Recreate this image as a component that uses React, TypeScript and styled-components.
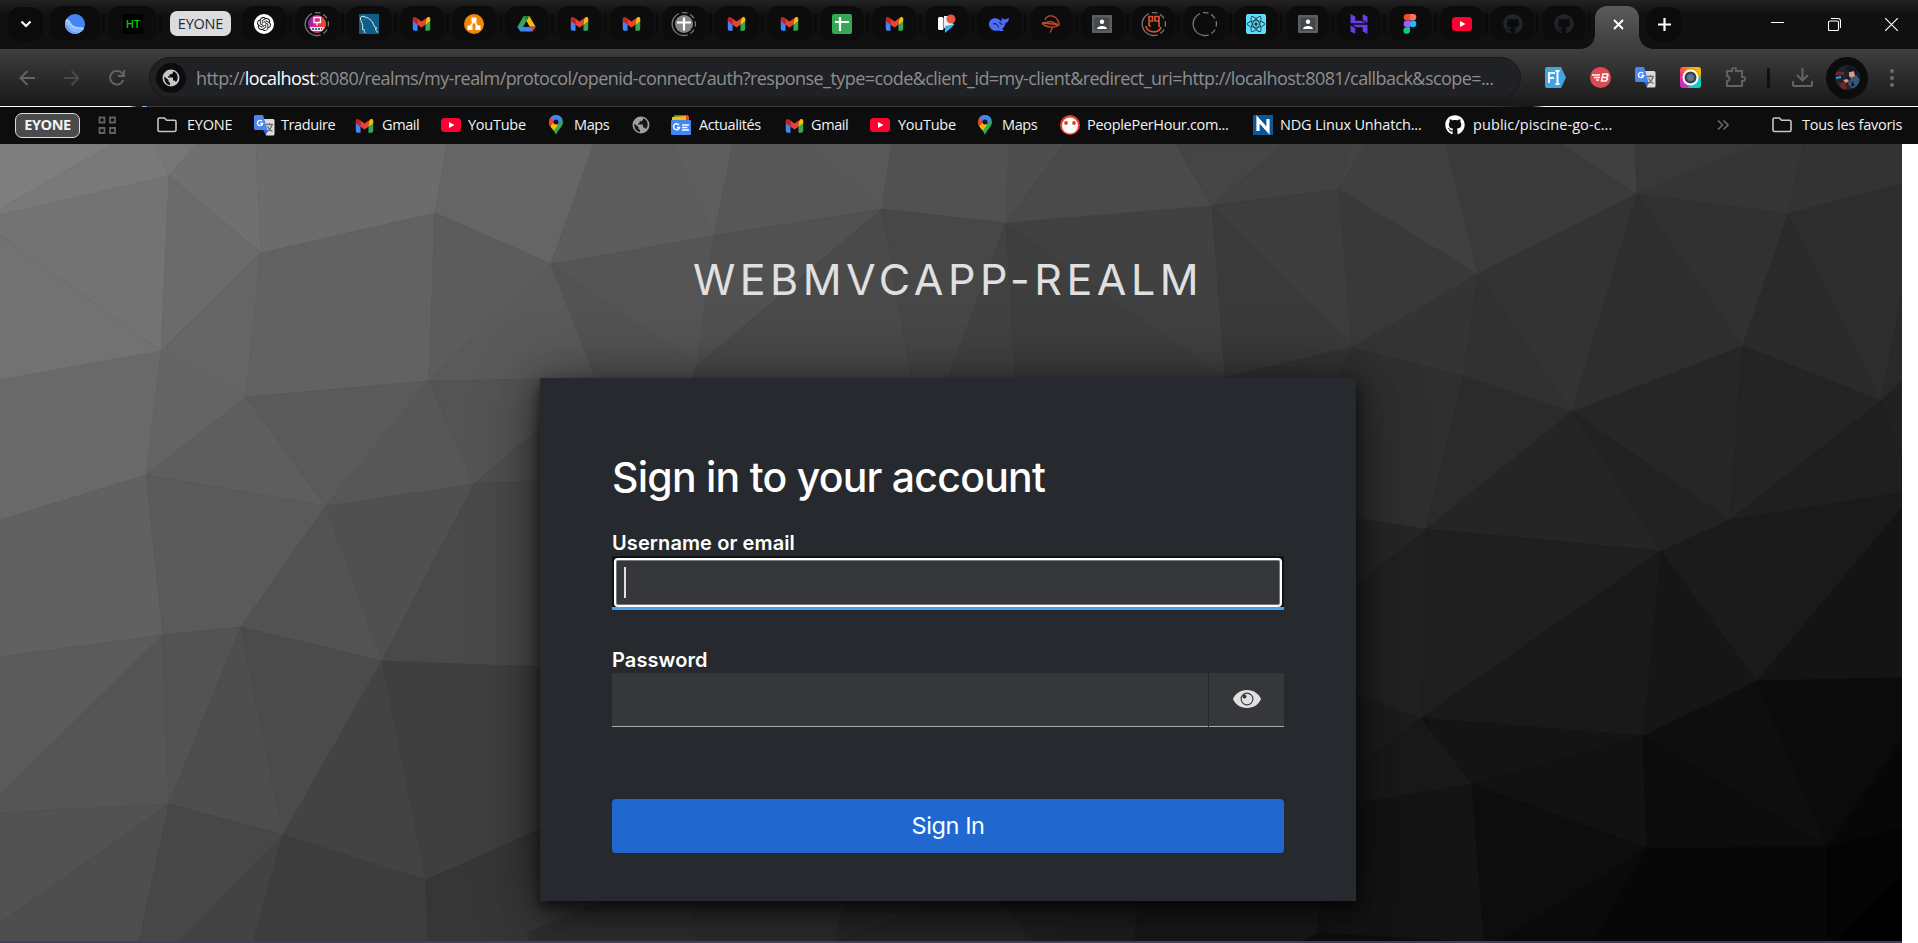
import React from "react";
import styled, { createGlobalStyle, css } from "styled-components";
import { FaGithub, FaReact } from "react-icons/fa";
import { SiOpenai, SiHostinger } from "react-icons/si";

const Global = createGlobalStyle`
  *, *::before, *::after { box-sizing: border-box; }
  html, body { margin: 0; padding: 0; background: #fff; overflow: hidden; }
  body { font-family: "Open Sans", "Noto Sans", sans-serif; }
  button, input { font: inherit; color: inherit; border: 0; padding: 0; background: none; }
  svg { display: block; flex: none; }
`;

const Window = styled.div`
  width: 1918px;
  height: 943px;
  display: flex;
  flex-direction: column;
  overflow: hidden;
  background: #0d0d0d;
`;

const uiText = css`
  font-family: "Open Sans", "Noto Sans", sans-serif;
  white-space: nowrap;
`;

/* ---------- tab strip ---------- */

const TabStrip = styled.header`
  flex: none;
  height: 49px;
  display: flex;
  align-items: flex-start;
  background: linear-gradient(#222 0, #181818 8px, #101010 16px, #101010 100%);
`;

const RoundButton = styled.button`
  width: 35px;
  height: 34px;
  margin: 7px 3px 0 8px;
  display: grid;
  place-items: center;
  border-radius: 12px;
  background: #0b0b0b;
`;

const Tab = styled.div<{ $w: number }>`
  position: relative;
  flex: none;
  width: ${(p) => p.$w}px;
  height: 35px;
  margin-top: 6px;
  padding: 0 4px;
  display: flex;
  &::after {
    content: "";
    position: absolute;
    right: -1px;
    top: 8px;
    width: 3px;
    height: 19px;
    background: #0a0a0a;
  }
`;

const TabPill = styled.div`
  flex: 1;
  display: grid;
  place-items: center;
  border-radius: 12px;
  background: #0c0c0c;
`;

const GroupLabel = styled.div`
  ${uiText}
  flex: none;
  width: 61px;
  height: 25px;
  margin: 11px 7px 0 9px;
  border-radius: 7px;
  background: #dadce0;
  color: #27282b;
  font-size: 14.5px;
  line-height: 25px;
  text-align: center;
  letter-spacing: -0.2px;
`;

const ActiveTab = styled.div`
  position: relative;
  flex: none;
  width: 44px;
  height: 43px;
  margin: 6px 0 0 5.4px;
  padding-left: 3px;
  display: grid;
  place-items: center;
  padding-bottom: 7px;
  border-radius: 12px 12px 0 0;
  background: linear-gradient(#5b5b5b, #3c3c3c);
  &::before, &::after {
    content: "";
    position: absolute;
    bottom: 0;
    width: 14px;
    height: 14px;
  }
  &::before { left: -14px; background: radial-gradient(circle at 0 0, transparent 13.5px, #3e3e3e 14px); }
  &::after { right: -14px; background: radial-gradient(circle at 100% 0, transparent 13.5px, #3e3e3e 14px); }
`;

const WindowControls = styled.div`
  margin-left: auto;
  height: 48px;
  display: flex;
  align-items: center;
  gap: 44px;
  padding-right: 20px;
`;

/* ---------- address bar ---------- */

const Toolbar = styled.div`
  flex: none;
  height: 57px;
  display: flex;
  align-items: center;
  padding-left: 19px;
  background: linear-gradient(#3e3e3e, #181818);
`;

const NavIcons = styled.div`
  display: flex;
  gap: 29px;
  margin-right: 24px;
`;

const Omnibox = styled.div`
  width: 1372px;
  height: 41px;
  display: flex;
  align-items: center;
  padding-left: 6px;
  border-radius: 21px;
  border: 1px solid #17181a;
  background: #202124;
`;

const SiteInfo = styled.span`
  width: 30px;
  height: 30px;
  display: grid;
  place-items: center;
  border-radius: 50%;
  background: #0c0c0c;
`;

const Url = styled.span`
  ${uiText}
  margin-left: 10px;
  font-size: 18px;
  color: #8e8e8e;
  letter-spacing: -0.57px;
  b { font-weight: 400; color: #fff; }
`;

const Extensions = styled.div`
  display: flex;
  align-items: center;
  gap: 24px;
  margin-left: 24px;
`;

const Divider = styled.span`
  width: 3px;
  height: 20px;
  margin: 0 -2px 0 -3px;
  border-radius: 2px;
  background: #101010;
`;

const Profile = styled.span`
  width: 42px;
  height: 42px;
  margin: 0 -2px 0 -11px;
  display: grid;
  place-items: center;
  border-radius: 50%;
  background: #0c0c0c;
`;

const LoadLine = styled.div`
  flex: none;
  height: 1px;
  background: linear-gradient(90deg, #fff 0 129px, #222 137px 142px, #8ab4f8 142px 147px, #3b3b3b 147px 1490px, #111 1532px, #fff 1545px);
`;

/* ---------- bookmarks ---------- */

const Bookmarks = styled.nav`
  ${uiText}
  flex: none;
  height: 37px;
  display: flex;
  align-items: center;
  padding-bottom: 1px;
  background: #0d0d0d;
  color: #f1f3f4;
  font-size: 14.5px;
`;

const Chip = styled.span`
  width: 65px;
  height: 25px;
  margin: 0 18px 0 15px;
  border: 1px solid #dadce0;
  border-radius: 7px;
  background: #4a4b4d;
  font-weight: 700;
  letter-spacing: -0.4px;
  line-height: 22px;
  text-align: center;
`;

const Bookmark = styled.span<{ $w: number; $gap?: number; $track?: number }>`
  flex: none;
  width: ${(p) => p.$w}px;
  display: flex;
  align-items: center;
  gap: ${(p) => p.$gap ?? 8}px;
  line-height: 18px;
  letter-spacing: ${(p) => p.$track ?? -0.4}px;
`;

/* ---------- login page ---------- */

const PageRow = styled.div`
  flex: 1;
  min-height: 0;
  display: flex;
`;

const Page = styled.main`
  position: relative;
  flex: none;
  width: 1902px;
  display: flex;
  flex-direction: column;
  align-items: center;
  padding-right: 6px;
  font-family: Inter, "Liberation Sans", sans-serif;
  border-bottom: 2px solid #3c4256;
  overflow: hidden;
`;

const Backdrop = styled.svg`
  position: absolute;
  left: 0;
  top: 0;
  z-index: 0;
`;

const Gutter = styled.div`
  flex: 1;
  background: #fff;
`;

const Realm = styled.h1`
  position: relative;
  margin: 109px 0 0;
  height: 125px;
  line-height: 52px;
  font-size: 43px;
  font-weight: 400;
  letter-spacing: 4.5px;
  color: #e0e0e0;
  white-space: nowrap;
`;

const Card = styled.section`
  position: relative;
  width: 816px;
  height: 523px;
  padding: 72px 72px 0;
  background: #26292d;
  color: #fff;
  box-shadow: 0 6px 12px rgba(3, 3, 3, 0.6), 0 0 60px rgba(3, 3, 3, 0.4), 0 16px 36px rgba(3, 3, 3, 0.35);
`;

const Title = styled.h2`
  margin: 0;
  height: 81px;
  line-height: 54px;
  font-size: 41px;
  font-weight: 500;
  letter-spacing: -0.76px;
  white-space: nowrap;
`;

const Label = styled.label`
  display: block;
  height: 25px;
  line-height: 24px;
  font-size: 20px;
  font-weight: 600;
  letter-spacing: 0.1px;
`;

const FocusedField = styled.div`
  height: 54px;
  margin-bottom: 38px;
  padding: 2px 2px 0;
  border-bottom: 3px solid #45a1f5;
  background: #111214;
`;

const FocusRing = styled.div`
  height: 49px;
  display: flex;
  align-items: center;
  padding-left: 8px;
  border: 2px solid #fff;
  border-radius: 4px;
  background: #36373b;
  box-shadow: inset 0 0 0 1px #77787b;
`;

const Caret = styled.span`
  width: 2px;
  height: 31px;
  background: #e0e0e0;
`;

const PasswordRow = styled.div`
  display: flex;
  gap: 1px;
  height: 54px;
  margin-bottom: 72px;
`;

const PasswordBox = styled.div`
  flex: 1;
  background: #36373b;
  border-bottom: 1px solid #aaabac;
`;

const EyeButton = styled.button`
  width: 75px;
  display: grid;
  place-items: center;
  padding-bottom: 1px;
  background: #36373b;
  border-bottom: 1px solid #aaabac;
`;

const SubmitButton = styled.button`
  width: 100%;
  height: 54px;
  border-radius: 4px;
  background: #2067cf;
  font-size: 23.5px;
  line-height: 54px;
  letter-spacing: -0.4px;
  text-align: center;
`;

/* ---------- icons ---------- */

const Gmail = ({ s = 19 }: { s?: number }) => (
  <svg width={s} height={s} viewBox="0 0 24 24">
    <path fill="#4285f4" d="M1 6v13a2 2 0 0 0 2 2h4V10z" />
    <path fill="#34a853" d="M23 6v13a2 2 0 0 1-2 2h-4V10z" />
    <path fill="#c5221f" d="M1 6v3l6 4.500V8L4.500 4C2.600 3.600 1 4.300 1 6z" />
    <path fill="#fbbc04" d="M23 6v3l-6 4.500V8l2.500-4C21.400 3.600 23 4.300 23 6z" />
    <path fill="#ea4335" d="M4.500 4L12 9.500 19.500 4 17 8v5.500l-5 3.700-5-3.700V8z" />
  </svg>
);

const YouTube = () => (
  <svg width="20" height="20" viewBox="0 0 20 20">
    <rect y="3" width="20" height="14" rx="3.500" fill="#ff0033" />
    <path fill="#fff" d="M8 7l5.500 3L8 13z" />
  </svg>
);

const MapsPin = () => (
  <svg width="20" height="20" viewBox="0 0 20 20">
    <clipPath id="pin"><path d="M10 0a7 7 0 0 0-7 7c0 5 5 7 7 13 2-6 7-8 7-13a7 7 0 0 0-7-7z" /></clipPath>
    <g clipPath="url(#pin)">
      <path fill="#34a853" d="M0 0h20v20H0z" />
      <path fill="#fbbc04" d="M0 14l3-4 5-3 4 3-6 8z" />
      <path fill="#ea4335" d="M0 2l5 0 4 4-5 6-4-3z" />
      <path fill="#4285f4" d="M3 1L10-1l8 3-6 8-2-3-2-1z" />
    </g>
    <circle cx="10" cy="7" r="2.500" fill="#15181d" />
  </svg>
);

const Translate = () => (
  <svg width="21" height="21" viewBox="0 0 21 21">
    <path fill="#dcdcdc" d="M7 4h12a1.500 1.500 0 0 1 1.500 1.500V19a1.500 1.500 0 0 1-1.500 1.500h-7z" />
    <path fill="#3367d6" d="M9 15h5l-2 5z" />
    <path stroke="#68737c" strokeWidth="1.300" fill="none" d="M12 9.500h7M15.500 8v1.500M18 9.500c-1 4-3 6-5 7M13.500 11.500c1 2 3 4 5 5" />
    <path fill="#4a86ee" d="M1.500 0H9l4.500 15H1.500A1.500 1.500 0 0 1 0 13.500v-12A1.500 1.500 0 0 1 1.500 0z" />
    <path fill="none" stroke="#fff" strokeWidth="1.400" d="M8 6.300A2.600 2.600 0 1 0 8.600 8.500H6.300" />
  </svg>
);

const Folder = () => (
  <svg width="20" height="16" viewBox="0 0 20 16">
    <path fill="none" stroke="#c4c6c9" strokeWidth="1.600" d="M1 13V2.500A1.500 1.500 0 0 1 2.500 1h5l2 2.300h8A1.500 1.500 0 0 1 19 4.800V13a1.500 1.500 0 0 1-1.500 1.500h-15A1.500 1.500 0 0 1 1 13z" />
  </svg>
);

const Globe = ({ s = 18, c = "#c7c7c7", bg = "#0c0c0c" }: { s?: number; c?: string; bg?: string }) => (
  <svg width={s} height={s} viewBox="0 0 18 18">
    <circle cx="9" cy="9" r="8.500" fill={c} />
    <path fill={bg} d="M2.200 7.500L6.500 11v1.500L8 14v2C4.500 15.500 2 12.500 2.200 7.500zM11 2.300v1.500L9.500 5.200H7.500v2H6v1.300h5v3h1.500l1.500 1.500c1.800-2 2.200-5 1-7.500-.8-1.600-2-2.700-4-3.200z" />
  </svg>
);

const Dashes = ({ children }: { children?: React.ReactNode }) => (
  <svg width="26" height="26" viewBox="0 0 26 26">
    <path d="M12 24.500a11.500 11.500 0 0 1-4-22" fill="none" stroke="#77787a" strokeWidth="1.300" />
    <path d="M11 1.700A11.500 11.500 0 1 1 12 24.500" fill="none" stroke="#77787a" strokeWidth="1.300" strokeDasharray="5.500 3" />
    {children}
  </svg>
);

const GithubMark = ({ c }: { c: string }) => <FaGithub size={20} color={c} />;

const Contact = () => (
  <svg width="20" height="20" viewBox="0 0 20 20">
    <rect y="1" width="20" height="18" rx="1" fill="#5c5f62" />
    <rect x="2.500" y="3.500" width="15" height="13" fill="#44474a" />
    <circle cx="10" cy="7.700" r="2.200" fill="#fff" />
    <path d="M5 15c0-4 10-4 10 0z" fill="#fff" />
  </svg>
);

const tabIcons: Record<string, React.ReactNode> = {
  earth: (
    <svg width="20" height="20" viewBox="0 0 20 20">
      <clipPath id="ball"><circle cx="10" cy="10" r="10" /></clipPath>
      <g clipPath="url(#ball)">
        <path fill="#4285f4" d="M0 0h20v20H0z" />
        <path fill="#8ab8fa" d="M0 5c5-1 5 5 9 7s7 0 11 3v5H0z" />
        <path fill="#aecbfa" d="M0 5c5-1 5 5 9 7s7 0 11 3l-1 1.500c-4-3-7-1-11-3S4 7 0 8z" />
        <path fill="#669df6" d="M0 11c4 0 4 6 9 7l6 1v2H0z" />
      </g>
    </svg>
  ),
  ht: (
    <svg width="20" height="20" viewBox="0 0 20 20">
      <rect width="20" height="20" rx="1" fill="#000" />
      <text x="10" y="14" fill="#0c0" fontSize="11" fontFamily="Open Sans, sans-serif" fontWeight="600" textAnchor="middle">HT</text>
    </svg>
  ),
  openai: (
    <svg width="20" height="20" viewBox="0 0 20 20">
      <circle cx="10" cy="10" r="10" fill="#fff" />
      <g transform="translate(3 3)"><SiOpenai size={14} color="#111" /></g>
    </svg>
  ),
  insta: (
    <Dashes>
      <defs>
        <linearGradient id="ig" x1="0" x2="1" y1="0" y2=".3"><stop stopColor="#5b2fc0" /><stop offset=".5" stopColor="#e0218a" /><stop offset="1" stopColor="#f4511e" /></linearGradient>
      </defs>
      <circle cx="13" cy="13" r="9" fill="url(#ig)" />
      <path d="M10 6.500h6.500v5H10zM13 11.500v3" fill="none" stroke="#fff" strokeWidth="1.300" />
      <path d="M5.500 16h15l-2.500 4H8z" fill="#e8e8f4" />
      <path d="M8 18h10" stroke="#25356b" strokeWidth="1.500" strokeDasharray="2 1" />
    </Dashes>
  ),
  mysql: (
    <svg width="20" height="20" viewBox="0 0 20 20">
      <rect width="20" height="20" fill="#0f5e87" />
      <path fill="none" stroke="#e2edf3" strokeWidth="1" d="M6 19c-1-2-1-3-1-4-1 1-1.500 1-1.500 0 .5-3 0-5-1-7S1 4 2 3s3-1 4 0c5 1 8 5 9 9l3 2.500-2 .5c1 1 2 2 2.500 3.500M5.500 5.500l.5.500" />
    </svg>
  ),
  gmail: <Gmail />,
  nodes: (
    <svg width="20" height="20" viewBox="0 0 20 20">
      <circle cx="10" cy="10" r="10" fill="#f08705" />
      <path d="M10 7L6 13M10 7l4 6" stroke="#fff" strokeWidth="1.500" />
      <path fill="#fff" d="M7.500 3.500h5v4.500h-5zM3.500 11.500h5V16h-5zM11.500 11.500h5V16h-5z" />
    </svg>
  ),
  drive: (
    <svg width="19" height="19" viewBox="0 0 24 24">
      <path fill="#34a853" d="M8.500 2.500L0.500 16l4 6L12 9z" />
      <path fill="#fbbc04" d="M8.500 2.500h7L23.500 16h-8z" />
      <path fill="#4285f4" d="M4.500 22L0.500 16h23l-4 6z" />
      <path fill="#ea4335" d="M16 16h7.500l-4 6z" />
      <path fill="#188038" d="M8.500 2.500h7L12 9z" />
      <path fill="#0c0c0c" d="M12 9l4 7H8z" />
    </svg>
  ),
  sheetGrey: (
    <Dashes>
      <circle cx="13" cy="13" r="9" fill="#858585" />
      <path d="M13 6.500v13M6 11.500h14" stroke="#fff" strokeWidth="2.200" />
    </Dashes>
  ),
  sheet: (
    <svg width="20" height="20" viewBox="0 0 20 20">
      <rect width="20" height="20" rx="2" fill="#34a853" />
      <path d="M8 3v14M3 8h14" stroke="#fff" strokeWidth="2.200" />
    </svg>
  ),
  cards: (
    <svg width="20" height="20" viewBox="0 0 20 20">
      <rect x="1" y="3" width="5.500" height="13" rx="1.500" fill="#fff" />
      <path d="M7 2h5v6l5 2-3 3-7 1z" fill="#eee" />
      <path d="M8 12l10-2-4 4-6 5z" fill="#29b6f6" />
      <circle cx="14" cy="5" r="4.500" fill="#ea5545" />
    </svg>
  ),
  whale: (
    <svg width="20" height="20" viewBox="0 0 20 20">
      <path fill="#4d6bfe" d="M0 10c0-4 4-6.500 8-5.500 2 .5 3 1.500 4.500 3 .5-1.500-.5-3 .5-4 .5 1.500 2 2 3.500 1.700L20 4c0 3-1.500 4.500-3.500 5-.5 3-2 5-3.500 6l2 1.500c-2 1-4 .5-5 0C4 18 0 14.500 0 10z" />
      <path fill="none" stroke="#0c0c0c" strokeWidth="1" d="M4 10c3-1 5 1 5.500 3.500M10 8.500c1.500 0 2.500 1 3 2.500" />
    </svg>
  ),
  hat: (
    <svg width="20" height="20" viewBox="0 0 20 20">
      <path fill="none" stroke="#c4492b" strokeWidth="1.300" d="M4 6c2-6 11-6 14 3v3" />
      <path fill="none" stroke="#c4492b" strokeWidth="1.300" d="M1 9l16 1.500L10 7.500zM1 9c4 5 9 5 16 3M9 18.500l2.500-5 5-2" />
    </svg>
  ),
  contact: <Contact />,
  pq: (
    <Dashes>
      <path fill="none" stroke="#d9532f" strokeWidth="1.700" d="M8 15V5.500h3.500v4.500H8M18 10h-4V5.500h4V16M5 15c1 7 13 8 15 1M8 15h2" />
    </Dashes>
  ),
  empty: <Dashes />,
  react: (
    <svg width="20" height="20" viewBox="0 0 20 20">
      <rect width="20" height="20" rx="2" fill="#61dafb" />
      <g transform="translate(1 1)"><FaReact size={18} color="#17303a" /></g>
    </svg>
  ),
  hostinger: <SiHostinger size={20} color="#673de6" />,
  figma: (
    <svg width="14" height="20" viewBox="0 0 14 20">
      <path fill="#f24e1e" d="M7 0H4a3.300 3.300 0 0 0 0 6.600h3z" />
      <path fill="#ff7262" d="M7 0h3a3.300 3.300 0 0 1 0 6.600H7z" />
      <path fill="#a259ff" d="M7 6.600H4a3.300 3.300 0 0 0 0 6.600h3z" />
      <circle cx="10" cy="9.900" r="3.300" fill="#1abcfe" />
      <path fill="#0acf83" d="M7 13.200H4A3.300 3.300 0 1 0 7 16.500z" />
    </svg>
  ),
  youtube: <YouTube />,
  github: <GithubMark c="#22262b" />,
};

const groupedTabs = [
  "openai", "insta", "mysql", "gmail", "nodes", "drive", "gmail", "gmail", "sheetGrey", "gmail", "gmail",
  "sheet", "gmail", "cards", "whale",
];
const looseTabs = ["hat", "contact", "pq", "empty", "react", "contact", "hostinger", "figma", "youtube", "github", "github"];

const TabItem = ({ name, w }: { name: string; w: number }) => (
  <Tab $w={w}>
    <TabPill>{tabIcons[name]}</TabPill>
  </Tab>
);

/* Each facet: grey level, then its corners in window coordinates. */
const facets: [number, string][] = [
  [0x7e, "0,144 113,144 0,209"], [0x79, "113,144 155,144 169,176 0,215 0,209"], [0x76, "155,144 197,144 169,176"],
  [0x70, "197,144 256,144 261,253 169,176"], [0x6c, "256,144 447,144 435,213 261,253"], [0x65, "447,144 594,144 551,264 435,213"],
  [0x73, "0,215 169,176 161,351 0,235"], [0x72, "0,235 161,351 0,380"], [0x6b, "169,176 261,253 161,351"],
  [0x69, "0,380 161,351 146,475 0,520"], [0x65, "161,351 261,253 246,397"], [0x64, "161,351 246,397 146,475"],
  [0x62, "261,253 435,213 429,381 246,397"], [0x5c, "435,213 551,264 429,381"], [0x5a, "429,381 551,264 600,378"],
  [0x5e, "146,475 246,397 326,506"], [0x5a, "246,397 429,381 326,506"], [0x57, "429,381 474,484 326,506"],
  [0x54, "429,381 600,378 474,484"], [0x4e, "474,484 600,378 600,478"], [0x61, "0,520 146,475 163,635 0,657"],
  [0x5a, "146,475 326,506 241,627 163,635"], [0x53, "326,506 382,661 241,627"], [0x50, "326,506 474,484 382,661"],
  [0x49, "474,484 600,478 600,669 382,661"], [0x5b, "0,657 163,635 0,795"], [0x55, "0,795 163,635 169,804 0,813"],
  [0x53, "163,635 241,627 169,804"], [0x4e, "241,627 283,835 169,804"], [0x4b, "241,627 382,661 283,835"],
  [0x52, "0,813 169,804 0,923"], [0x4e, "0,923 169,804 139,943 0,943"], [0x47, "169,804 283,835 178,943 139,943"],
  [0x43, "283,835 178,943 253,943"], [0x43, "382,661 426,880 283,835"], [0x3f, "382,661 600,669 600,803 426,880"],
  [0x3d, "283,835 426,880 428,943 253,943"], [0x36, "426,880 600,803 600,943 428,943"],
  [0x2e, "527,933 592,905 690,860 697,943 530,943"], [0x2c, "690,860 860,860 833,943 697,943"],
  [0x27, "860,860 1000,860 930,905 833,943"], [0x24, "930,905 1000,901 1035,943 833,943"],
  [0x20, "966,860 1120,860 1088,901 1050,943 1035,943 1000,901"], [0x1e, "1120,860 1139,860 1135,943 1050,943 1088,901"],
  [0x19, "1139,860 1340,860 1318,933 1300,943 1135,943"],
  [0x5d, "594,144 672,144 714,236 551,264"], [0x5e, "672,144 733,144 714,236"], [0x57, "733,144 804,144 882,209 714,236"],
  [0x58, "804,144 892,144 882,209"], [0x51, "892,144 1009,144 1006,223 882,209"], [0x4e, "1009,144 1064,144 1006,223"],
  [0x4a, "1064,144 1176,144 1212,206 1006,223"], [0x45, "1176,144 1284,144 1212,206"], [0x42, "1284,144 1352,144 1339,189 1212,206"],
  [0x44, "1352,144 1365,144 1339,189"], [0x55, "551,264 714,236 697,366"], [0x53, "551,264 697,366 687,390 600,390"],
  [0x51, "714,236 882,209 697,366"], [0x4a, "697,366 882,209 914,390 687,390"], [0x47, "882,209 1006,223 944,390 914,390"],
  [0x42, "1006,223 1016,390 944,390"], [0x3e, "1006,223 1225,378 1225,390 1016,390"], [0x41, "1006,223 1212,206 1225,378"],
  [0x3a, "1212,206 1352,347 1225,378"], [0x3d, "1212,206 1339,189 1352,347"], [0x39, "1339,189 1478,274 1352,347"],
  [0x40, "1365,144 1446,144 1478,274 1339,189"], [0x3a, "1446,144 1562,144 1637,194 1478,274"], [0x40, "1562,144 1635,144 1637,194"],
  [0x38, "1635,144 1761,144 1637,194"], [0x35, "1761,144 1804,144 1788,214 1637,194"], [0x33, "1804,144 1902,144 1902,184 1788,214"],
  [0x33, "1478,274 1637,194 1572,412"], [0x34, "1352,347 1478,274 1463,376"], [0x31, "1478,274 1572,412 1463,376"],
  [0x2e, "1637,194 1743,346 1572,412"], [0x31, "1637,194 1788,214 1743,346"], [0x2a, "1788,214 1881,401 1743,346"],
  [0x2d, "1788,214 1902,184 1902,294 1881,401"], [0x29, "1881,401 1902,294 1902,381"], [0x33, "1225,378 1352,347 1336,390 1225,390"],
  [0x2f, "1352,347 1463,376 1426,529 1300,510 1336,378"], [0x2b, "1463,376 1572,412 1426,529"], [0x26, "1572,412 1743,346 1730,520"],
  [0x24, "1743,346 1881,401 1730,520"], [0x25, "1572,412 1661,551 1426,529"], [0x22, "1572,412 1730,520 1661,551"],
  [0x21, "1881,401 1902,381 1902,457"], [0x1f, "1730,520 1881,401 1902,457 1902,493"], [0x1a, "1730,520 1902,493 1902,508 1757,681"],
  [0x1b, "1661,551 1730,520 1757,681"], [0x14, "1902,508 1902,678 1757,681"], [0x26, "1300,510 1426,529 1300,630"],
  [0x1f, "1426,529 1661,551 1421,718"], [0x21, "1426,529 1421,718 1300,675 1300,630"], [0x19, "1661,551 1643,736 1421,718"],
  [0x16, "1661,551 1757,681 1643,736"], [0x1c, "1300,675 1421,718 1300,823"], [0x19, "1421,718 1472,784 1300,811"],
  [0x14, "1421,718 1643,736 1472,784"], [0x12, "1472,784 1643,736 1647,848"], [0x0e, "1643,736 1757,681 1827,847"],
  [0x0c, "1643,736 1827,847 1647,848"], [0x0b, "1757,681 1902,678 1902,739 1827,847"], [0x07, "1902,739 1902,828 1827,847"],
  [0x14, "1323,808 1472,784 1484,943 1318,933"], [0x0e, "1318,933 1484,943 1300,943"],
  [0x0d, "1472,784 1647,848 1496,943 1484,943"], [0x0a, "1647,848 1592,943 1496,943"],
  [0x07, "1647,848 1827,847 1827,943 1592,943"], [0x04, "1827,847 1902,828 1902,876 1834,943 1827,943"], [0x00, "1902,876 1902,943 1834,943"],
];

const PolyBackdrop = () => (
  <Backdrop width="1902" height="799" viewBox="0 144 1902 799">
    <rect y="144" width="1902" height="799" fill="#2c2c2c" />
    {facets.map(([g, points], i) => (
      <polygon key={i} points={points} fill={`rgb(${g},${g},${g})`} stroke={`rgb(${g},${g},${g})`} strokeWidth=".6" />
    ))}
  </Backdrop>
);

export default function App() {
  return (
    <Window>
      <Global />
      <TabStrip>
        <RoundButton aria-label="Search tabs">
          <svg width="12" height="8" viewBox="0 0 12 8"><path d="M1.500 1.500L6 6l4.500-4.500" fill="none" stroke="#fff" strokeWidth="2.200" /></svg>
        </RoundButton>
        <TabItem name="earth" w={58} />
        <TabItem name="ht" w={57} />
        <GroupLabel>EYONE</GroupLabel>
        {groupedTabs.map((n, i) => <TabItem key={i} name={n} w={52.5} />)}
        {looseTabs.map((n, i) => <TabItem key={i} name={n} w={51.3} />)}
        <ActiveTab>
          <svg width="11" height="11" viewBox="0 0 11 11"><path d="M1 1l9 9M10 1l-9 9" stroke="#fff" strokeWidth="2" /></svg>
        </ActiveTab>
        <RoundButton aria-label="New tab">
          <svg width="13" height="13" viewBox="0 0 13 13"><path d="M6.500 0v13M0 6.500h13" stroke="#fff" strokeWidth="2.200" /></svg>
        </RoundButton>
        <WindowControls>
          <svg width="13" height="13" viewBox="0 0 13 13"><path d="M0 4.500h13" stroke="#fff" /></svg>
          <svg width="13" height="13" viewBox="0 0 13 13"><path d="M.5 4.500a1.500 1.500 0 0 1 1.500-1.500h7a1.500 1.500 0 0 1 1.500 1.500v7a1 1 0 0 1-1 1H1.500a1 1 0 0 1-1-1zM3 .5h7a2.500 2.500 0 0 1 2.500 2.500v7" fill="none" stroke="#fff" strokeWidth="1.100" /></svg>
          <svg width="13" height="13" viewBox="0 0 13 13"><path d="M0 0l13 13M13 0L0 13" stroke="#fff" strokeWidth="1.200" /></svg>
        </WindowControls>
      </TabStrip>

      <Toolbar>
        <NavIcons>
          <svg width="16" height="16" viewBox="0 0 16 16"><path d="M16 8H2M8.500 1L1.500 8l7 7" fill="none" stroke="#626467" strokeWidth="1.900" /></svg>
          <svg width="16" height="16" viewBox="0 0 16 16"><path d="M0 8h14M7.500 1l7 7-7 7" fill="none" stroke="#484a4c" strokeWidth="1.900" /></svg>
          <svg width="16" height="16" viewBox="0 0 16 16"><path d="M14.300 10A6.800 6.800 0 1 1 13 3.200L15 5.500M15.200 0v6H9" fill="none" stroke="#626467" strokeWidth="1.900" /></svg>
        </NavIcons>
        <Omnibox>
          <SiteInfo><Globe /></SiteInfo>
          <Url>http://<b>localhost</b>:8080/realms/my-realm/protocol/openid-connect/auth?response_type=code&amp;client_id=my-client&amp;redirect_uri=http://localhost:8081/callback&amp;scope=...</Url>
        </Omnibox>
        <Extensions>
          <svg width="21" height="21" viewBox="0 0 21 21">
            <path d="M2 0h14l5 10.500L16 21H2a2 2 0 0 1-2-2V2a2 2 0 0 1 2-2z" fill="#42a5e0" />
            <path d="M4 16V6h6M4 11h5M10.500 4h4M10.500 17h4M12.500 4v13" stroke="#fff" strokeWidth="1.900" fill="none" />
          </svg>
          <svg width="21" height="21" viewBox="0 0 21 21">
            <circle cx="10.500" cy="10.500" r="10.500" fill="#df4a51" />
            <path d="M2 8h8M4 10.500h6M6 13h3" stroke="#fff" strokeWidth="1.500" />
            <path d="M13 7h4.500l.5 1.500-1.500 2 1 1.500-1.500 2h-4.500zM12.500 10.500h4" stroke="#fff" strokeWidth="1.600" fill="none" />
          </svg>
          <Translate />
          <svg width="21" height="21" viewBox="0 0 21 21">
            <defs><linearGradient id="cam" x1="0" x2="1" y1="1" y2="0"><stop stopColor="#b02fe0" /><stop offset=".35" stopColor="#f0308c" /><stop offset=".65" stopColor="#fb8c00" /><stop offset="1" stopColor="#e9d21d" /></linearGradient></defs>
            <rect width="21" height="21" rx="3" fill="url(#cam)" />
            <path d="M21 9v9a3 3 0 0 1-3 3H7z" fill="#17c9c4" />
            <circle cx="10.500" cy="10.500" r="7" fill="#344150" stroke="#fff" strokeWidth="2" />
            <circle cx="10.500" cy="10.500" r="3.500" fill="#64748b" />
          </svg>
          <svg width="21" height="21" viewBox="0 0 21 21"><path d="M2 4h5V3a2 2 0 0 1 4 0v1h6v6h1a2 2 0 0 1 0 4h-1v5H2v-5a2.500 2.500 0 0 0 0-5z" fill="none" stroke="#5f6164" strokeWidth="2" /></svg>
          <Divider />
          <svg width="21" height="21" viewBox="0 0 21 21"><path d="M10.500 1v12M5 8l5.500 5.500L16 8M1 14v3.500A1.500 1.500 0 0 0 2.500 19h16a1.500 1.500 0 0 0 1.500-1.500V14" fill="none" stroke="#5f6164" strokeWidth="2.200" /></svg>
          <Profile>
            <svg width="25" height="25" viewBox="0 0 25 25">
              <clipPath id="face"><circle cx="12.500" cy="12.500" r="12.500" /></clipPath>
              <g clipPath="url(#face)">
                <path fill="#20222f" d="M0 0h25v25H0z" />
                <path fill="#6d2630" d="M0 6l9 1v3H0zM4 19l6-3 2 8-5 1z" />
                <path fill="#34587c" d="M16 13l5-3 4 5-3 9-6-1-3-4z" />
                <path fill="#15161f" d="M17 16l3 4-4 2z" />
                <path fill="#d69a80" d="M14 7l5-1 1 5-4 2-2-2zM8 15l4-1 2 2-3 2z" />
                <path fill="#15161f" d="M11 2l7-2 5 5-2 5-2-4-6 1z" />
                <path fill="#2b9bd0" d="M1 12l5-1v2l-5 1z" />
              </g>
            </svg>
          </Profile>
          <svg width="4" height="18" viewBox="0 0 4 18" fill="#6a6c6f"><circle cx="2" cy="2" r="2" /><circle cx="2" cy="9" r="2" /><circle cx="2" cy="16" r="2" /></svg>
        </Extensions>
      </Toolbar>
      <LoadLine />

      <Bookmarks>
        <Chip>EYONE</Chip>
        <Bookmark $w={59}>
          <svg width="19" height="19" viewBox="0 0 19 19" fill="none" stroke="#5f6164" strokeWidth="1.800"><path d="M1.500 1.500h5v5h-5zM12 1.500h5v5h-5zM1.500 12h5v5h-5zM12 12h5v5h-5z" /></svg>
        </Bookmark>
        <Bookmark $w={97} $gap={10} $track={-0.2}><Folder />EYONE</Bookmark>
        <Bookmark $w={101} $gap={6}><Translate />Traduire</Bookmark>
        <Bookmark $w={86}><Gmail />Gmail</Bookmark>
        <Bookmark $w={105} $gap={7} $track={-0.25}><YouTube />YouTube</Bookmark>
        <Bookmark $w={86}><MapsPin />Maps</Bookmark>
        <Bookmark $w={39}><Globe c="#9aa0a6" bg="#17181a" /></Bookmark>
        <Bookmark $w={114}>
          <svg width="20" height="20" viewBox="0 0 20 20">
            <path fill="#0c9d58" d="M3 0h14v4H3z" /><path fill="#ea4335" d="M8 1h10v4H8z" /><path fill="#fbbc04" d="M1 2l14-1v5H1z" />
            <rect y="5" width="20" height="15" rx="1" fill="#4285f4" />
            <path d="M8 10A3 3 0 1 0 8.500 12.500H6M11 10h7M11 12.500h5.500M11 15h7" fill="none" stroke="#fff" strokeWidth="1.500" />
          </svg>
          Actualités
        </Bookmark>
        <Bookmark $w={85} $gap={7}><Gmail />Gmail</Bookmark>
        <Bookmark $w={105} $track={-0.25}><YouTube />YouTube</Bookmark>
        <Bookmark $w={85} $gap={7}><MapsPin />Maps</Bookmark>
        <Bookmark $w={193} $gap={7} $track={-0.3}>
          <svg width="20" height="20" viewBox="0 0 20 20">
            <circle cx="10" cy="10" r="10" fill="#ee3f2c" /><circle cx="10" cy="10.500" r="8" fill="#fff" />
            <circle cx="6" cy="8" r="1.900" fill="#d8442c" /><circle cx="14" cy="8" r="1.900" fill="#d8442c" />
          </svg>
          PeoplePerHour.com...
        </Bookmark>
        <Bookmark $w={192} $gap={7} $track={-0.17}>
          <svg width="20" height="20" viewBox="0 0 20 20">
            <rect width="20" height="20" fill="#0c5796" />
            <path d="M5 16V4.500L15 15.500V4" fill="none" stroke="#fff" strokeWidth="3.200" />
          </svg>
          NDG Linux Unhatch...
        </Bookmark>
        <Bookmark $w={272} $track={0.08}><GithubMark c="#fff" />public/piscine-go-c...</Bookmark>
        <Bookmark $w={55}>
          <svg width="12" height="10" viewBox="0 0 12 10"><path d="M1 .5L5.500 5 1 9.500M6.500.500L11 5 6.500 9.500" fill="none" stroke="#66686b" strokeWidth="1.600" /></svg>
        </Bookmark>
        <Bookmark $w={140} $gap={10} $track={-0.25}><Folder />Tous les favoris</Bookmark>
      </Bookmarks>

      <PageRow>
        <Page>
          <PolyBackdrop />
          <Realm>WEBMVCAPP-REALM</Realm>
          <Card>
            <Title>Sign in to your account</Title>
            <Label>Username or email</Label>
            <FocusedField><FocusRing><Caret /></FocusRing></FocusedField>
            <Label>Password</Label>
            <PasswordRow>
              <PasswordBox />
              <EyeButton aria-label="Show password">
                <svg width="28" height="18" viewBox="0 0 28 18">
                  <path fill="#e0e0e0" d="M14 0C7 0 2 4 0 9c2 5 7 9 14 9s12-4 14-9c-2-5-7-9-14-9z" />
                  <circle cx="14" cy="9" r="5.900" fill="none" stroke="#36373b" strokeWidth="1.100" />
                  <circle cx="11.500" cy="6.500" r="2" fill="#36373b" />
                </svg>
              </EyeButton>
            </PasswordRow>
            <SubmitButton>Sign In</SubmitButton>
          </Card>
        </Page>
        <Gutter />
      </PageRow>
    </Window>
  );
}
